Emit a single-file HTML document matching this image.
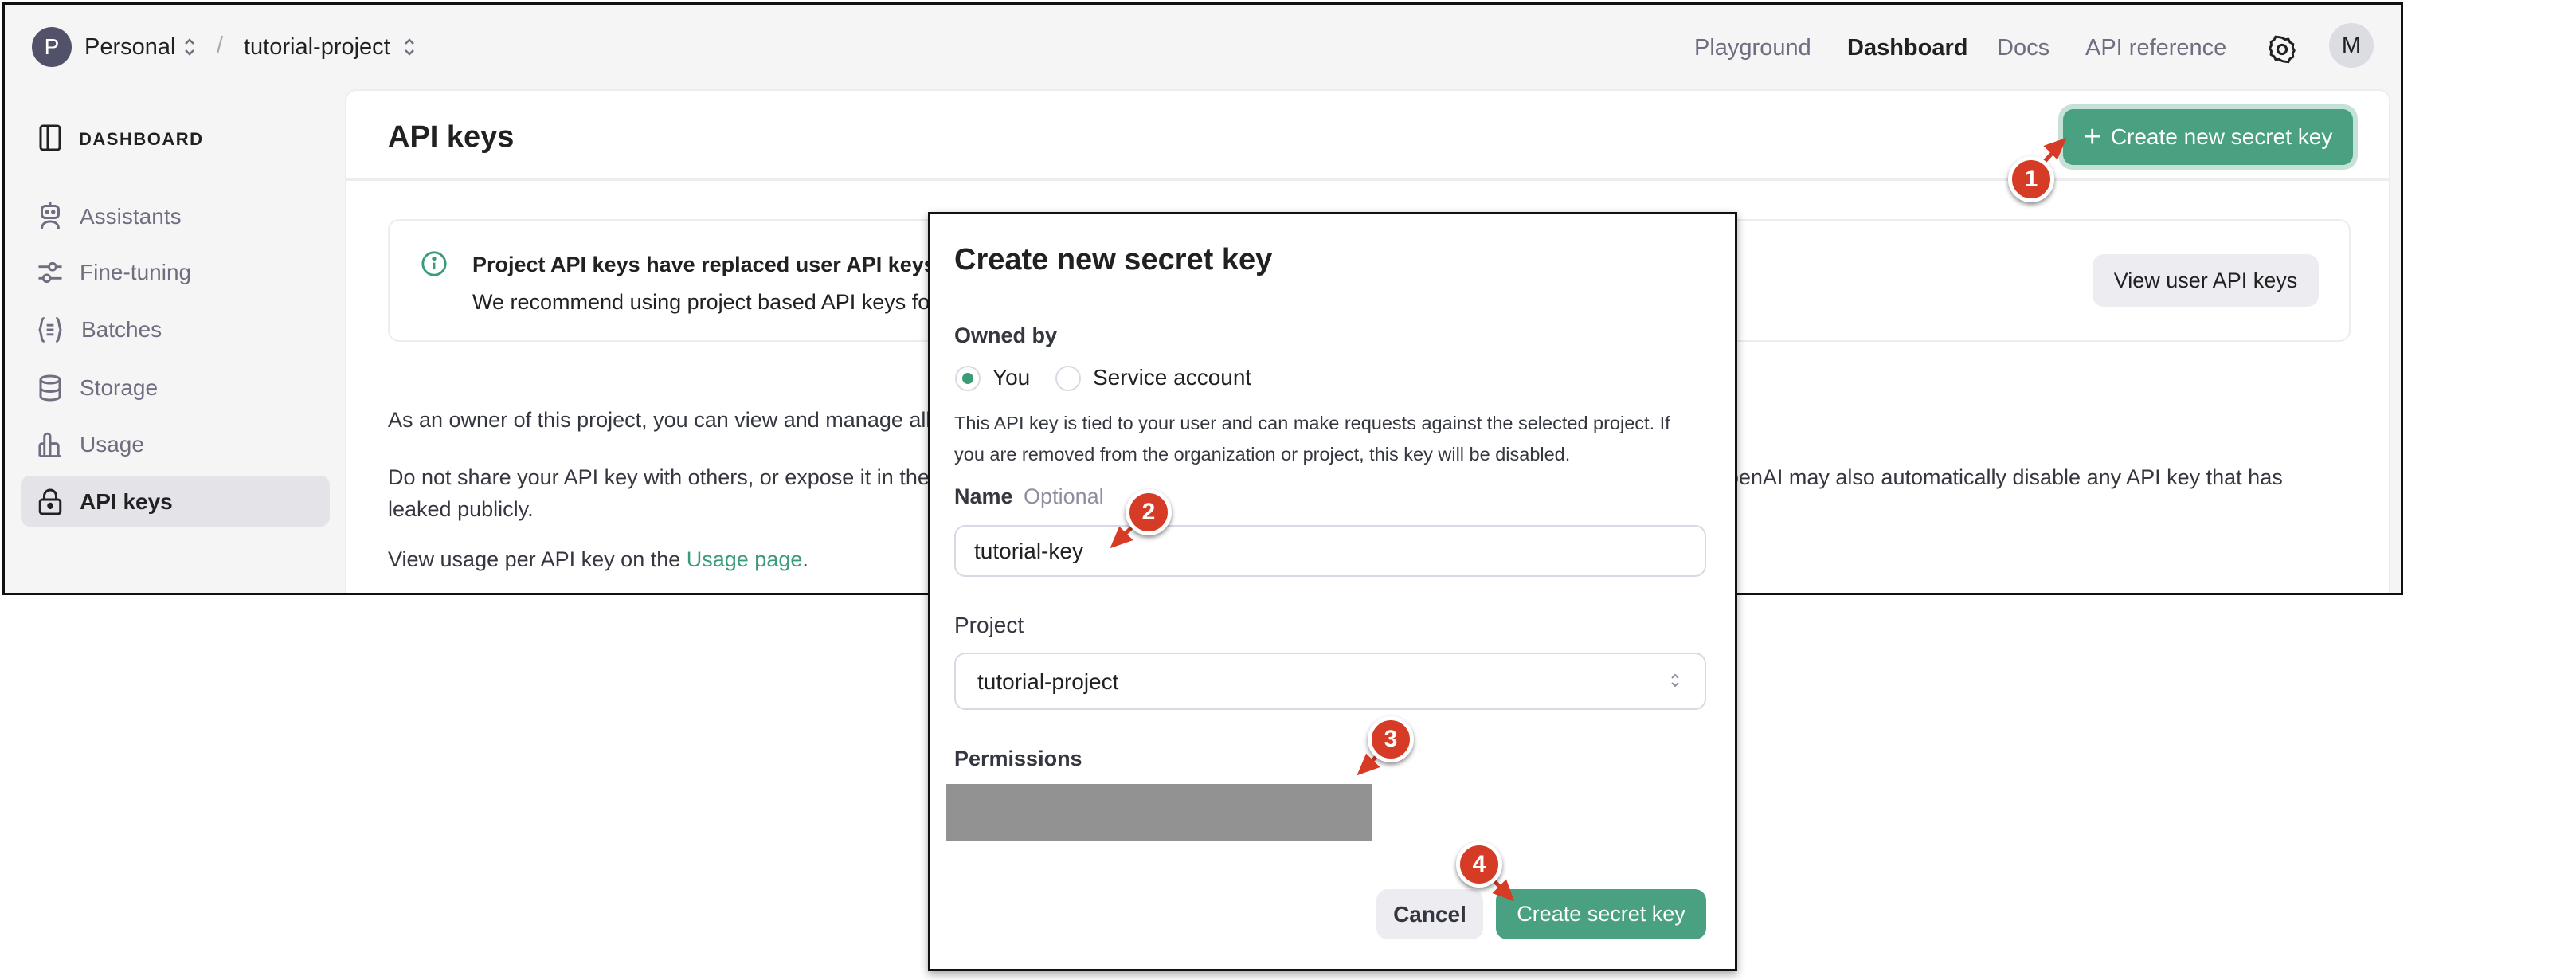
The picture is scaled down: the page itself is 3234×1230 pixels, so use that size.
<!DOCTYPE html>
<html><head><meta charset="utf-8"><style>
*{box-sizing:border-box;margin:0;padding:0}
body{width:3234px;height:1230px;background:#fff;position:relative;overflow:hidden;font-family:"Liberation Sans",sans-serif;color:#202123}
.a{position:absolute;white-space:nowrap}
#win{position:absolute;left:3px;top:3px;width:3014px;height:744px;border:3px solid #111;background:#f5f5f5;overflow:hidden}
.nav{font-size:29px;color:#6e6e80}
.side{font-size:28px;color:#6e6e80;display:flex;align-items:center}
.side svg{margin-right:22px}
.mk{position:absolute;width:58px;height:58px;border-radius:50%;background:#d63b26;border:5px solid #fff;box-shadow:0 3px 6px rgba(0,0,0,.45);color:#fff;font-weight:bold;font-size:30px;display:flex;align-items:center;justify-content:center}
</style></head><body>
<div id="win">
 <div class="a" style="left:34px;top:28px;width:50px;height:50px;border-radius:50%;background:#51516a;color:#fff;font-size:28px;display:flex;align-items:center;justify-content:center">P</div>
 <div class="a" style="left:100px;top:37px;font-size:29px;color:#202123">Personal</div>
 <svg class="a" style="left:224px;top:40px" width="16" height="26" viewBox="0 0 16 26" fill="none" stroke="#6e6e80" stroke-width="2.5"><path d="M3 9l5-5 5 5M3 17l5 5 5-5"/></svg>
 <div class="a" style="left:266px;top:35px;font-size:29px;color:#aaa">/</div>
 <div class="a" style="left:300px;top:37px;font-size:29px;color:#202123">tutorial-project</div>
 <svg class="a" style="left:500px;top:40px" width="16" height="26" viewBox="0 0 16 26" fill="none" stroke="#6e6e80" stroke-width="2.5"><path d="M3 9l5-5 5 5M3 17l5 5 5-5"/></svg>
 <div class="a nav" style="left:2121px;top:38px">Playground</div>
 <div class="a nav" style="left:2313px;top:38px;color:#202123;font-weight:bold">Dashboard</div>
 <div class="a nav" style="left:2501px;top:38px">Docs</div>
 <div class="a nav" style="left:2612px;top:38px">API reference</div>
 <svg class="a" style="left:2840px;top:36px" width="38" height="40" viewBox="0 0 24 24" fill="none" stroke="#202123" stroke-width="2"><path d="M12 2l2.5 1.5 3-.3 1.3 2.7 2.7 1.6-.3 3 1.3 2.5-1.3 2.5.3 3-2.7 1.6-1.3 2.7-3-.3L12 22l-2.5-1.5-3 .3-1.3-2.7-2.7-1.6.3-3L1.5 11l1.3-2.5-.3-3 2.7-1.6 1.3-2.7 3 .3z" transform="scale(.92) translate(1 1)"/><circle cx="12" cy="12" r="3.5"/></svg>
 <div class="a" style="left:2918px;top:23px;width:56px;height:56px;border-radius:50%;background:#dcdce3;color:#202123;font-size:29px;display:flex;align-items:center;justify-content:center">M</div>

 <svg class="a" style="left:42px;top:150px" width="30" height="34" viewBox="0 0 20 22" fill="none" stroke="#202123" stroke-width="2"><rect x="2" y="1" width="16" height="20" rx="2"/><line x1="8" y1="1" x2="8" y2="21"/></svg>
 <div class="a" style="left:93px;top:156px;font-size:22px;font-weight:bold;letter-spacing:1.5px;color:#202123">DASHBOARD</div>
 <div class="a" style="left:20px;top:591px;width:388px;height:64px;border-radius:12px;background:#e3e3e8"></div>
 <div class="a side" style="left:42px;top:248px"><svg width="30" height="36" viewBox="0 0 20 24" fill="none" stroke="#6e6e80" stroke-width="2"><rect x="3" y="3" width="14" height="10" rx="3"/><line x1="10" y1="0" x2="10" y2="3"/><circle cx="7.5" cy="8" r=".8" fill="#6e6e80"/><circle cx="12.5" cy="8" r=".8" fill="#6e6e80"/><path d="M3 22c0-4 3-6 7-6s7 2 7 6"/></svg>Assistants</div>
 <div class="a side" style="left:42px;top:320px"><svg width="30" height="32" viewBox="0 0 20 22" fill="none" stroke="#6e6e80" stroke-width="2"><line x1="0" y1="6" x2="20" y2="6"/><circle cx="12" cy="6" r="3" fill="#f5f5f5"/><line x1="0" y1="16" x2="20" y2="16"/><circle cx="7" cy="16" r="3" fill="#f5f5f5"/></svg>Fine-tuning</div>
 <div class="a side" style="left:40px;top:392px"><svg width="34" height="32" viewBox="0 0 22 22" fill="none" stroke="#6e6e80" stroke-width="2"><path d="M6 1C3 1 4 6 2 11c2 5 1 10 4 10M16 1c3 0 2 5 4 10-2 5-1 10-4 10"/><line x1="8" y1="7" x2="14" y2="7"/><line x1="8" y1="11" x2="14" y2="11"/><line x1="8" y1="15" x2="14" y2="15"/></svg>Batches</div>
 <div class="a side" style="left:42px;top:464px"><svg width="30" height="34" viewBox="0 0 20 22" fill="none" stroke="#6e6e80" stroke-width="2"><ellipse cx="10" cy="4" rx="8" ry="3"/><path d="M2 4v14c0 2 4 3 8 3s8-1 8-3V4M2 11c0 2 4 3 8 3s8-1 8-3"/></svg>Storage</div>
 <div class="a side" style="left:42px;top:536px"><svg width="30" height="32" viewBox="0 0 20 22" fill="none" stroke="#6e6e80" stroke-width="2"><path d="M1 21V12a2 2 0 0 1 4 0v9M5 21V4a2.5 2.5 0 0 1 5 0v17M10 21V10h5a2 2 0 0 1 2 2v9zM1 21h18"/></svg>Usage</div>
 <div class="a side" style="left:42px;top:607px;color:#202123;font-weight:bold"><svg width="30" height="34" viewBox="0 0 20 22" fill="none" stroke="#202123" stroke-width="2"><path d="M5 9V6a5 5 0 0 1 10 0v3"/><rect x="1.5" y="9" width="17" height="12" rx="2"/><circle cx="10" cy="14" r="1.5" fill="#202123"/><line x1="10" y1="14" x2="10" y2="17"/></svg>API keys</div>

 <div class="a" style="left:427px;top:106px;width:2568px;height:700px;background:#fff;border:2px solid #ececf1;border-radius:14px"></div>
 <div class="a" style="left:427px;top:218px;width:2568px;height:3px;background:#ececf1"></div>
 <div class="a" style="left:481px;top:145px;font-size:38px;font-weight:bold;color:#202123">API keys</div>
 <div class="a" style="left:2578px;top:125px;width:376px;height:82px;border-radius:18px;background:#c6e2d6"></div>
 <div class="a" style="left:2584px;top:131px;width:364px;height:70px;border-radius:13px;background:#4aa181;color:#fff;font-size:28px;display:flex;align-items:center;justify-content:center"><span style="font-size:38px;font-weight:300;margin-right:12px">+</span>Create new secret key</div>

 <div class="a" style="left:481px;top:269px;width:2464px;height:154px;border:2px solid #ececf1;border-radius:14px;background:#fff"></div>
 <svg class="a" style="left:522px;top:308px" width="34" height="34" viewBox="0 0 24 24" fill="none" stroke="#3a9c77" stroke-width="2"><circle cx="12" cy="12" r="10"/><line x1="12" y1="11" x2="12" y2="17"/><circle cx="12" cy="7.5" r=".9" fill="#3a9c77"/></svg>
 <div class="a" style="left:587px;top:311px;font-size:27px;font-weight:bold">Project API keys have replaced user API keys.</div>
 <div class="a" style="left:587px;top:358px;font-size:27px">We recommend using project based API keys for more granular control over your resources.</div>
 <div class="a" style="left:2621px;top:313px;width:284px;height:66px;border-radius:14px;background:#ececf1;font-size:27px;display:flex;align-items:center;justify-content:center">View user API keys</div>

 <div class="a" style="left:481px;top:506px;font-size:27px;color:#353740">As an owner of this project, you can view and manage all API keys in this project.</div>
 <div class="a" style="left:481px;top:573px;font-size:27px;color:#353740;line-height:40px">Do not share your API key with others, or expose it in the browser or other client-side code. In order to protect the security of your account, OpenAI may also automatically disable any API key that has<br>leaked publicly.</div>
 <div class="a" style="left:481px;top:681px;font-size:27px;color:#353740">View usage per API key on the <span style="color:#3a9c77">Usage page</span>.</div>
</div>

<div class="a" style="left:1165px;top:266px;width:1016px;height:953px;background:#fff;border:3px solid #111;box-shadow:0 4px 10px rgba(0,0,0,.35)"></div>
<div class="a" style="left:1198px;top:305px;font-size:38px;font-weight:bold">Create new secret key</div>
<div class="a" style="left:1198px;top:406px;font-size:27px;font-weight:bold;color:#353740">Owned by</div>
<div class="a" style="left:1199px;top:459px;width:32px;height:32px;border-radius:50%;border:2px solid #d9d9e3;display:flex;align-items:center;justify-content:center"><div style="width:14px;height:14px;border-radius:50%;background:#3a9c77"></div></div>
<div class="a" style="left:1246px;top:458px;font-size:28px">You</div>
<div class="a" style="left:1325px;top:459px;width:32px;height:32px;border-radius:50%;border:2px solid #d9d9e3"></div>
<div class="a" style="left:1372px;top:458px;font-size:28px">Service account</div>
<div class="a" style="left:1198px;top:512px;font-size:23.5px;line-height:39px;color:#353740">This API key is tied to your user and can make requests against the selected project. If<br>you are removed from the organization or project, this key will be disabled.</div>
<div class="a" style="left:1198px;top:608px;font-size:27px;font-weight:bold;color:#353740">Name <span style="font-weight:normal;color:#8e8ea0;margin-left:6px">Optional</span></div>
<div class="a" style="left:1198px;top:659px;width:944px;height:65px;border:2px solid #d9d9e3;border-radius:14px"></div>
<div class="a" style="left:1223px;top:676px;font-size:28px">tutorial-key</div>
<div class="a" style="left:1198px;top:769px;font-size:28px;color:#353740">Project</div>
<div class="a" style="left:1198px;top:819px;width:944px;height:72px;border:2px solid #d9d9e3;border-radius:14px"></div>
<div class="a" style="left:1227px;top:840px;font-size:28px">tutorial-project</div>
<svg class="a" style="left:2097px;top:843px" width="12" height="22" viewBox="0 0 12 22" fill="none" stroke="#8e8ea0" stroke-width="2"><path d="M2 8l4-4 4 4M2 14l4 4 4-4"/></svg>
<div class="a" style="left:1198px;top:937px;font-size:27px;font-weight:bold;color:#353740">Permissions</div>
<div class="a" style="left:1188px;top:984px;width:535px;height:71px;background:#929292"></div>
<div class="a" style="left:1728px;top:1116px;width:134px;height:63px;border-radius:14px;background:#ececf1;font-size:28px;font-weight:bold;color:#353740;display:flex;align-items:center;justify-content:center">Cancel</div>
<div class="a" style="left:1878px;top:1116px;width:264px;height:63px;border-radius:14px;background:#4aa181;font-size:27px;color:#fff;display:flex;align-items:center;justify-content:center">Create secret key</div>

<svg class="a" style="left:0;top:0" width="3234" height="1230">
 <g stroke="#d63b26" stroke-width="5" fill="#d63b26">
  <line x1="2560" y1="210" x2="2584" y2="184"/><polygon points="2590,177 2570,184 2582,196"/>
  <line x1="1425" y1="658" x2="1405" y2="677"/><polygon points="1398,684 1406,665 1418,677"/>
  <line x1="1735" y1="943" x2="1715" y2="962"/><polygon points="1708,969 1716,950 1728,962"/>
  <line x1="1870" y1="1100" x2="1890" y2="1120"/><polygon points="1897,1127 1878,1120 1890,1108"/>
 </g>
</svg>
<div class="mk" style="left:2521px;top:196px">1</div>
<div class="mk" style="left:1413px;top:614px">2</div>
<div class="mk" style="left:1717px;top:899px">3</div>
<div class="mk" style="left:1828px;top:1056px">4</div>
</body></html>
